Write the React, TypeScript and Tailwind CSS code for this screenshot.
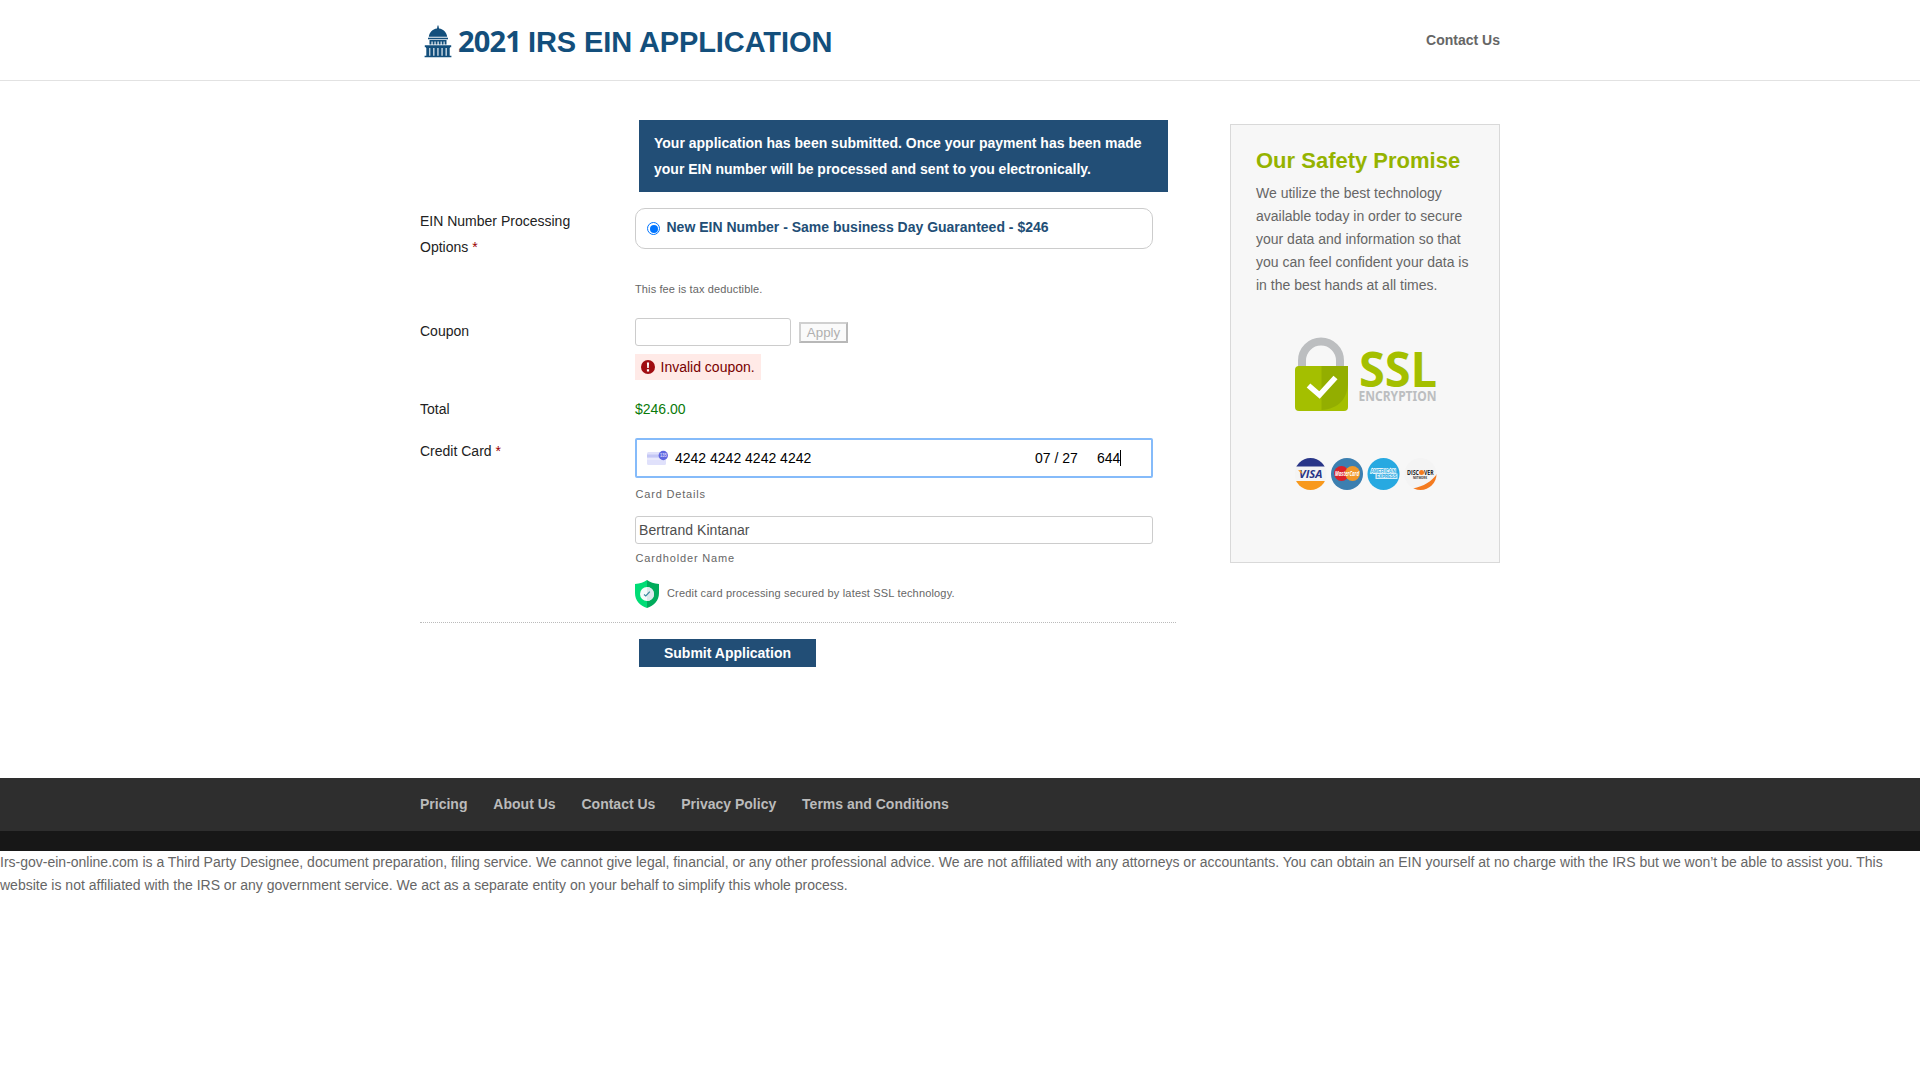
import React from "react";

const LINKS = ["Pricing", "About Us", "Contact Us", "Privacy Policy", "Terms and Conditions"];

function Capitol() {
  return (
    <svg width="28" height="33" viewBox="0 0 28 33" fill="#134f7c">
      <rect x="13.4" y="0.6" width="1.2" height="3" />
      <path d="M13 2.500h2v1c4.600.500 7.700 4 8.200 8.300H4.800c.500-4.300 3.600-7.800 8.200-8.300z" />
      <path d="M4 12.700h20v1.600H4z" />
      <path d="M5.500 15h17v1.500H5.500zM5.500 15h2v4.500h-2zM8.600 15h1.900v4.500H8.600zM11.600 15h1.900v4.500h-1.900zM14.700 15h1.900v4.500h-1.900zM17.700 15h1.900v4.500h-1.900zM20.600 15h1.900v4.500h-1.900z" />
      <path d="M.800 20.200h26.400v2H.800zM2 22h24v1H2zM2.300 22h3v9h-3zM6.300 22h3v9h-3zM10.400 22h3v9h-3zM14.500 22h3v9h-3zM18.600 22h3v9h-3zM22.700 22h3v9h-3zM.600 30.800h26.800v1.500H.600z" />
    </svg>
  );
}

function SslBadge() {
  return (
    <svg width="142" height="76" viewBox="0 0 142 76" className="block">
      <path d="M7 30V23.500a19 19 0 0 1 38 0V30" fill="none" stroke="#bcbec0" strokeWidth="8" />
      <rect x="0" y="29" width="53" height="45" rx="4" fill="#a4bf00" />
      <path d="M26.500 29H53v16c0 17-10 27-26.500 28z" fill="#93ae00" />
      <path d="M13.500 48.500l11 9.500L40.500 40.500" fill="none" stroke="#fff" strokeWidth="5.500" />
      <text x="64" y="50" fontFamily="'Noto Sans', sans-serif" fontWeight="700" fontSize="49" textLength="78" lengthAdjust="spacingAndGlyphs" fill="#a4bf00">SSL</text>
      <text x="63.500" y="64" fontFamily="'Noto Sans', sans-serif" fontWeight="700" fontSize="13.500" textLength="78" lengthAdjust="spacingAndGlyphs" fill="#bcbec0">ENCRYPTION</text>
    </svg>
  );
}

function CardBrands() {
  return (
    <svg width="142" height="34" viewBox="0 0 142 34" className="block">
      <defs>
        <clipPath id="c1"><circle cx="15.500" cy="17" r="16" /></clipPath>
        <clipPath id="c4"><circle cx="125.500" cy="17" r="16" /></clipPath>
      </defs>
      <g clipPath="url(#c1)">
        <rect x="-1" width="34" height="34" fill="#f4f4f4" />
        <rect x="-1" width="34" height="9.500" fill="#293688" />
        <rect x="-1" y="24" width="34" height="10" fill="#f8991d" />
      </g>
      <text x="4" y="21" fontFamily="'Open Sans', sans-serif" fontWeight="700" fontStyle="italic" fontSize="10.500" textLength="23.500" lengthAdjust="spacingAndGlyphs" fill="#293688">VISA</text>
      <path d="M3 13.300h3l1.500 4z" fill="#f8991d" />
      <circle cx="52" cy="17" r="16" fill="#3c7fb0" />
      <circle cx="46.500" cy="16.500" r="7.500" fill="#d9222a" />
      <circle cx="57.500" cy="16.500" r="7.500" fill="#f1982a" />
      <text x="40" y="19" fontFamily="'Open Sans', sans-serif" fontWeight="700" fontStyle="italic" fontSize="6.500" textLength="24" lengthAdjust="spacingAndGlyphs" fill="#fff">MasterCard</text>
      <circle cx="88.500" cy="17" r="16" fill="#27a9e1" />
      <text x="75.500" y="15.500" fontFamily="'Liberation Sans', sans-serif" fontWeight="700" fontSize="5.500" textLength="25" lengthAdjust="spacingAndGlyphs" fill="#27a9e1" stroke="#fff" strokeWidth="1.300" paintOrder="stroke">AMERICAN</text>
      <rect x="80.500" y="16.500" width="22" height="5.500" fill="#d5effa" />
      <text x="81.500" y="21.100" fontFamily="'Liberation Sans', sans-serif" fontWeight="700" fontSize="5" textLength="20" lengthAdjust="spacingAndGlyphs" fill="#27a9e1">EXPRESS</text>
      <g clipPath="url(#c4)">
        <rect x="109" width="34" height="34" fill="#f4f4f4" />
        <path d="M142 17c-6 8-13 12-24 14.500V34h24z" fill="#f47b20" />
      </g>
      <text x="112" y="17.800" fontFamily="'Open Sans', sans-serif" fontWeight="700" fontSize="6.500" textLength="12" lengthAdjust="spacingAndGlyphs" fill="#27272b">DISC</text>
      <circle cx="126.500" cy="15.500" r="2.500" fill="#f47b20" />
      <text x="129" y="17.800" fontFamily="'Open Sans', sans-serif" fontWeight="700" fontSize="6.500" textLength="9.500" lengthAdjust="spacingAndGlyphs" fill="#27272b">VER</text>
      <text x="118" y="22" fontFamily="'Open Sans', sans-serif" fontWeight="700" fontSize="3.600" textLength="14" lengthAdjust="spacingAndGlyphs" fill="#333">NETWORK</text>
    </svg>
  );
}

function CardIcon() {
  return (
    <svg width="22" height="16" viewBox="0 0 22 16">
      <rect x="0" y="2" width="19" height="13" rx="1.500" fill="#e0e1fb" />
      <rect x="0" y="4.500" width="19" height="3" fill="#c4c7f5" />
      <rect x="0" y="8.500" width="19" height="1" fill="#f1f1fe" />
      <circle cx="16.300" cy="5.500" r="4.700" fill="#6067e0" />
      <text x="12.900" y="7.400" fontFamily="'Liberation Sans', sans-serif" fontWeight="700" fontSize="5" textLength="6.800" lengthAdjust="spacingAndGlyphs" fill="#d5d7fa">135</text>
    </svg>
  );
}

function Shield() {
  return (
    <svg width="24" height="28" viewBox="0 0 24 28">
      <path d="M12 0C9 2.500 5 3.600 0 4v9c0 7.500 5 12.500 12 15z" fill="#00dd76" />
      <path d="M12 0c3 2.500 7 3.600 12 4v9c0 7.500-5 12.500-12 15z" fill="#00ab5b" />
      <circle cx="12" cy="14" r="7" fill="#f4fafa" />
      <path d="M12 7a7 7 0 0 1 0 14z" fill="#dde8ec" />
      <path d="M9 14.500l1.800 1.500 4-4.300" fill="none" stroke="#3a88a0" strokeWidth="1.200" />
    </svg>
  );
}

function Label({ text, required }: { text: string; required?: boolean }) {
  return (
    <div className="w-[215px] shrink-0 pr-[60px] leading-[26px] text-[#222]">
      {text}
      {required && <span className="text-[#9b0000]"> *</span>}
    </div>
  );
}

export default function App() {
  return (
    <div className="min-h-[1080px] bg-white font-['Liberation_Sans',Arial,sans-serif] text-[14px] text-[#666]">
      <header className="h-[81px] border-b border-[#e2e2e2]">
        <div className="mx-auto flex h-20 w-[1080px] items-start justify-between">
          <div className="flex items-start pl-[4px] text-[#134f7c]">
            <div className="pt-[25px]"><Capitol /></div>
            <h1 className="flex items-baseline pt-[21px] pl-[6px] leading-[40px] font-bold whitespace-nowrap">
              <span className="w-[70px] font-['Noto_Sans',sans-serif] text-[29px] tracking-[-0.8px]">2021</span>
              <span className="text-[29px] tracking-[-0.1px]">IRS EIN APPLICATION</span>
            </h1>
          </div>
          <a className="pt-[27px] leading-[26px] font-bold">Contact Us</a>
        </div>
      </header>

      <main className="mx-auto flex h-[697px] w-[1080px] justify-between">
        <form className="w-[756px] pt-[39px]">
          <div className="ml-[219px] h-[72px] w-[529px] bg-[#224e76] px-[15px] py-[10px] leading-[26px] font-bold whitespace-nowrap text-white">
            Your application has been submitted. Once your payment has been made
            <br />
            your EIN number will be processed and sent to you electronically.
          </div>

          <div className="mt-4 flex h-[110px]">
            <Label text="EIN Number Processing Options" required />
            <div>
              <div className="flex h-[41px] w-[518px] items-start rounded-[10px] border border-[#ccc] pt-[5px] pl-[11px]">
                <span className="mt-[8px] flex size-[13px] items-center justify-center rounded-full border border-[#0075ff]">
                  <span className="size-[8px] rounded-full bg-[#0075ff]" />
                </span>
                <span className="pl-[6.500px] leading-[26px] font-bold text-[#224e76]">New EIN Number - Same business Day Guaranteed - $246</span>
              </div>
              <p className="mt-[27px] text-[11px] leading-[26px] tracking-[0.12px]">This fee is tax deductible.</p>
            </div>
          </div>

          <div className="flex h-[78px]">
            <Label text="Coupon" />
            <div>
              <div className="flex items-start gap-2">
                <input className="h-[28px] w-[156px] rounded-[3px] border border-[#ccc] px-1" />
                <button type="button" className="mt-[4px] h-[21px] w-[49px] border-2 border-t-[#d0d0d0] border-r-[#b8b8b8] border-b-[#b8b8b8] border-l-[#d0d0d0] bg-[#fafafa] text-[13.33px] leading-[17px] text-[#b0b0b0]">Apply</button>
              </div>
              <div className="mt-2 flex h-[26px] w-[126px] items-center bg-[#ffeae7] pl-[6px] text-[#790000]">
                <svg width="14" height="14" viewBox="0 0 14 14">
                  <circle cx="7" cy="7" r="7" fill="#a00d12" />
                  <path d="M5.900 2.500h2.200l-.300 5.500H6.200zM5.900 9.300h2.200v2.200H5.900z" fill="#fff" />
                </svg>
                <span className="pl-[5.500px] leading-[26px]">Invalid coupon.</span>
              </div>
            </div>
          </div>

          <div className="flex h-[42px]">
            <Label text="Total" />
            <div className="leading-[26px] text-[#0a7a0a]">$246.00</div>
          </div>

          <div className="flex h-[184px]">
            <Label text="Credit Card" required />
            <div className="w-[518px]">
              <div className="flex h-[40px] items-center rounded-[2px] border-2 border-[#85bbfa] pl-[10px] text-black">
                <CardIcon />
                <span className="w-[366px] pl-[6px]">4242 4242 4242 4242</span>
                <span className="w-[62px]">07 / 27</span>
                <span>644</span>
                <span className="h-[16px] w-px bg-black" />
              </div>
              <p className="mt-[3px] pl-[0.500px] text-[11px] leading-[26px] tracking-[0.82px]">Card Details</p>
              <div className="mt-[9px] h-[28px] rounded-[3px] border border-[#ccc] pl-[3px] leading-[26px] tracking-[0.050px] text-[#4e4e4e]">Bertrand Kintanar</div>
              <p className="mt-px pl-[0.500px] text-[11px] leading-[26px] tracking-[0.85px]">Cardholder Name</p>
              <div className="mt-[9px] flex h-[28px] items-start">
                <Shield />
                <span className="pl-2 text-[11px] leading-[26px] tracking-[0.17px]">Credit card processing secured by latest SSL technology.</span>
              </div>
            </div>
          </div>

          <div className="border-t border-dotted border-[#bbb] pt-[16px]">
            <button type="button" className="ml-[219px] block h-[28px] w-[177px] bg-[#224e76] leading-[28px] font-bold text-white">Submit Application</button>
          </div>
        </form>

        <aside className="mt-[43px] h-[439px] w-[270px] border border-[#d9d9d9] bg-[#f7f7f7] pt-[21px] pl-[25px]">
          <h2 className="text-[22px] leading-[30px] font-bold whitespace-nowrap text-[#95b300]">Our Safety Promise</h2>
          <p className="pt-[6px] leading-[23px] whitespace-nowrap">
            We utilize the best technology
            <br />
            available today in order to secure
            <br />
            your data and information so that
            <br />
            you can feel confident your data is
            <br />
            in the best hands at all times.
          </p>
          <div className="mt-[40px] ml-[39px]"><SslBadge /></div>
          <div className="mt-[44px] ml-[39px]"><CardBrands /></div>
        </aside>
      </main>

      <footer>
        <div className="h-[53px] bg-[#2e2e2e]">
          <nav className="mx-auto flex w-[1080px] gap-[25.900px] pt-[13px] leading-[26px] font-bold text-[#bbb]">
            {LINKS.map((l) => <a key={l}>{l}</a>)}
          </nav>
        </div>
        <div className="h-[20px] bg-[#171717]" />
      </footer>
      <p className="leading-[23px]">
        Irs-gov-ein-online.com is a Third Party Designee, document preparation, filing service. We cannot give legal, financial, or any other professional advice. We are not affiliated with any attorneys or accountants. You can obtain an EIN yourself at no charge with the IRS but we won’t be able to assist you. This
        <br />
        website is not affiliated with the IRS or any government service. We act as a separate entity on your behalf to simplify this whole process.
      </p>
    </div>
  );
}
